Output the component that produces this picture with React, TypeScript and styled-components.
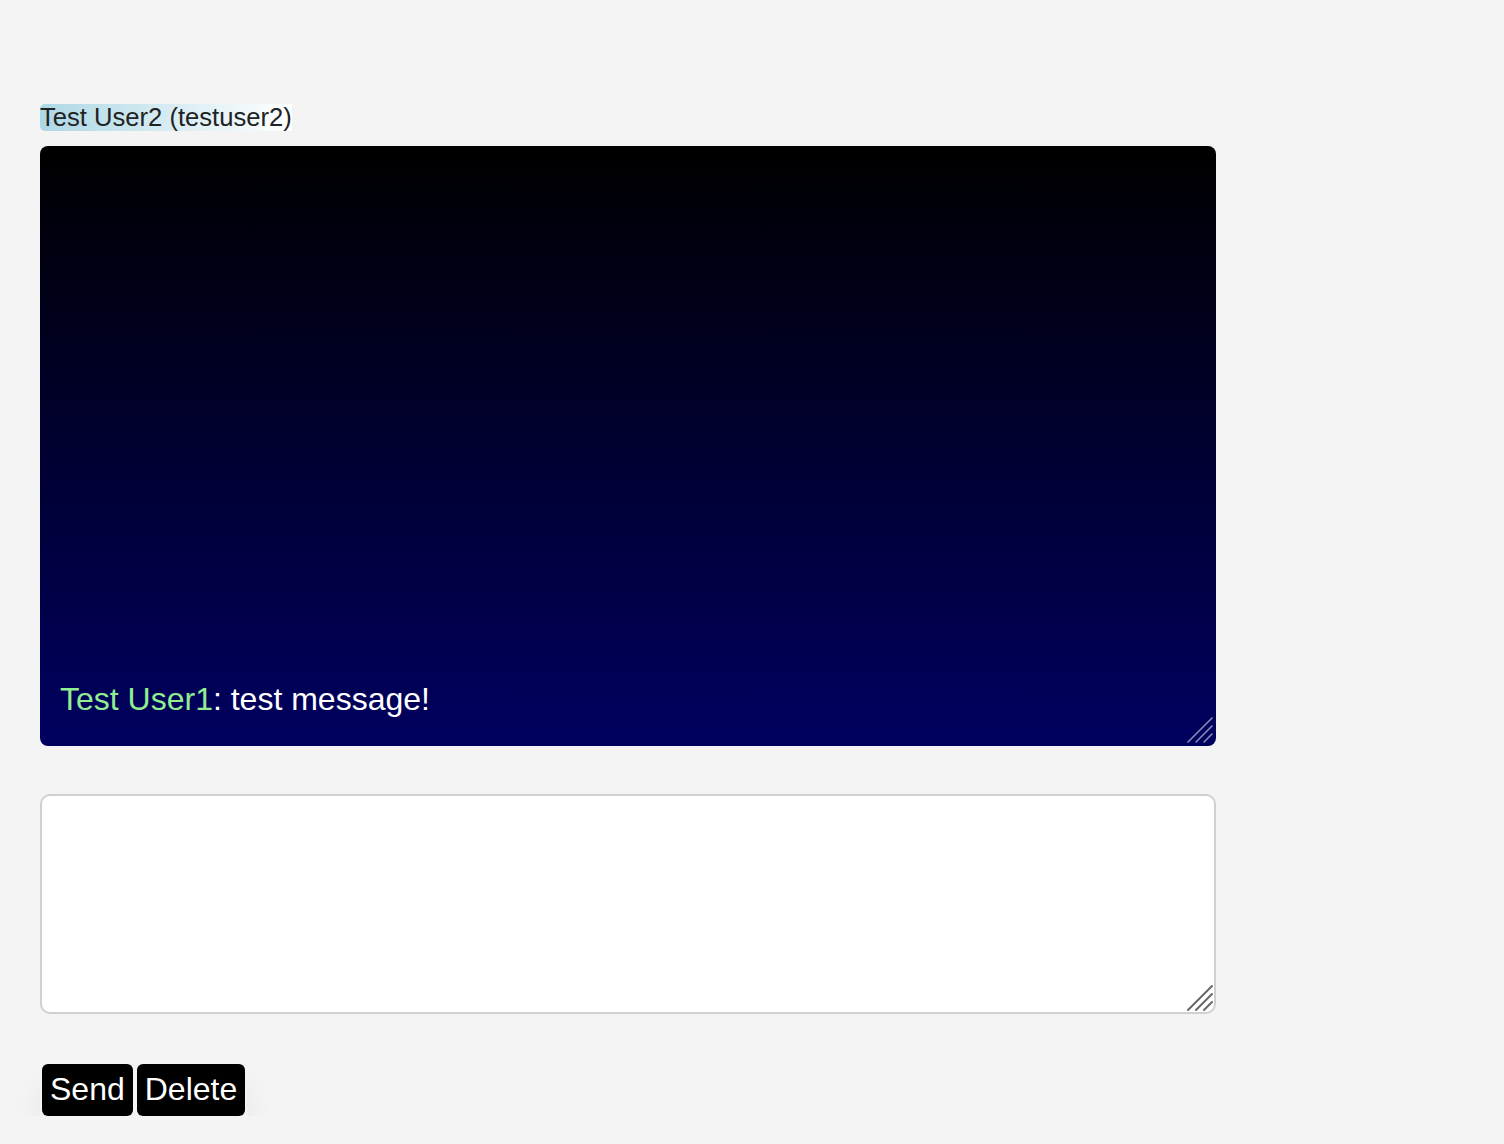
import styled, { createGlobalStyle } from "styled-components";

const GlobalStyle = createGlobalStyle`
  html, body {
    margin: 0;
    padding: 0;
    background: #f4f4f4;
    font-family: "Liberation Sans", Arial, Helvetica, sans-serif;
  }
`;

interface Message {
  user: string;
  text: string;
}

const messages: Message[] = [{ user: "Test User1", text: "test message!" }];

// grip drawn in the bottom-right corner of resizable boxes
const Grip = ({ color, light }: { color: string; light?: boolean }) => (
  <GripIcon width="28" height="28" viewBox="0 0 28 28">
    <g stroke={color} strokeWidth={light ? 1.6 : 2} strokeLinecap="round">
      <line x1="2" y1="26" x2="26" y2="2" />
      <line x1="10" y1="26" x2="26" y2="10" />
      <line x1="18" y1="26" x2="26" y2="18" />
    </g>
  </GripIcon>
);

const App = () => {
  return (
    <>
      <GlobalStyle />
      <Page>
        <UserLabel>Test User2 (testuser2)</UserLabel>
        <Field>
          <ChatLog>
            {messages.map((m, i) => (
              <MessageLine key={i}>
                <UserName>{m.user}</UserName>: {m.text}
              </MessageLine>
            ))}
          </ChatLog>
          <Grip color="rgba(190, 190, 215, 0.75)" light />
        </Field>
        <Field $top={48}>
          <Input />
          <Grip color="#666666" />
        </Field>
        <Buttons>
          <Button>Send</Button>
          <Button>Delete</Button>
        </Buttons>
      </Page>
    </>
  );
};

const Page = styled.main`
  padding: 104px 40px 0;
  width: 1176px;
  display: flex;
  flex-direction: column;
  align-items: flex-start;
`;

const UserLabel = styled.div`
  font-size: 25.6px;
  line-height: 27px;
  color: #222;
  background: linear-gradient(to right, #add8e6, #ffffff);
  border-radius: 5px 0 0 5px;
  margin-bottom: 15px;
`;

const Field = styled.div<{ $top?: number }>`
  position: relative;
  width: 1176px;
  margin-top: ${(p) => p.$top ?? 0}px;
`;

const GripIcon = styled.svg`
  position: absolute;
  right: 2px;
  bottom: 2px;
  pointer-events: none;
`;

const ChatLog = styled.div`
  box-sizing: border-box;
  width: 1176px;
  height: 600px;
  padding: 20px 20px 28px;
  border-radius: 8px;
  background: linear-gradient(to bottom, #000000, #000060);
  color: #ffffff;
  overflow: auto;
  resize: vertical;
  display: flex;
  flex-direction: column;
  justify-content: flex-end;

  &::-webkit-resizer {
    background: transparent;
  }
`;

const MessageLine = styled.div`
  font-size: 32px;
  line-height: 37px;
`;

const UserName = styled.span`
  color: #90ee90;
`;

const Input = styled.textarea`
  display: block;
  box-sizing: border-box;
  width: 1176px;
  height: 220px;
  border: 2px solid #d0d0d0;
  border-radius: 10px;
  background: #ffffff;
  font-family: inherit;
  font-size: 20px;
  outline: none;

  &::-webkit-resizer {
    background: transparent;
  }
`;

const Buttons = styled.div`
  display: flex;
  margin-top: 50px;
  box-shadow: 0 22px 30px rgba(0, 0, 0, 0.06);
`;

const Button = styled.button`
  margin: 0 2px;
  padding: 7px 8px 9px;
  font-family: inherit;
  font-size: 32px;
  line-height: 36px;
  color: #ffffff;
  background: #000000;
  border: none;
  border-radius: 6px;
  cursor: pointer;
`;

export default App;
